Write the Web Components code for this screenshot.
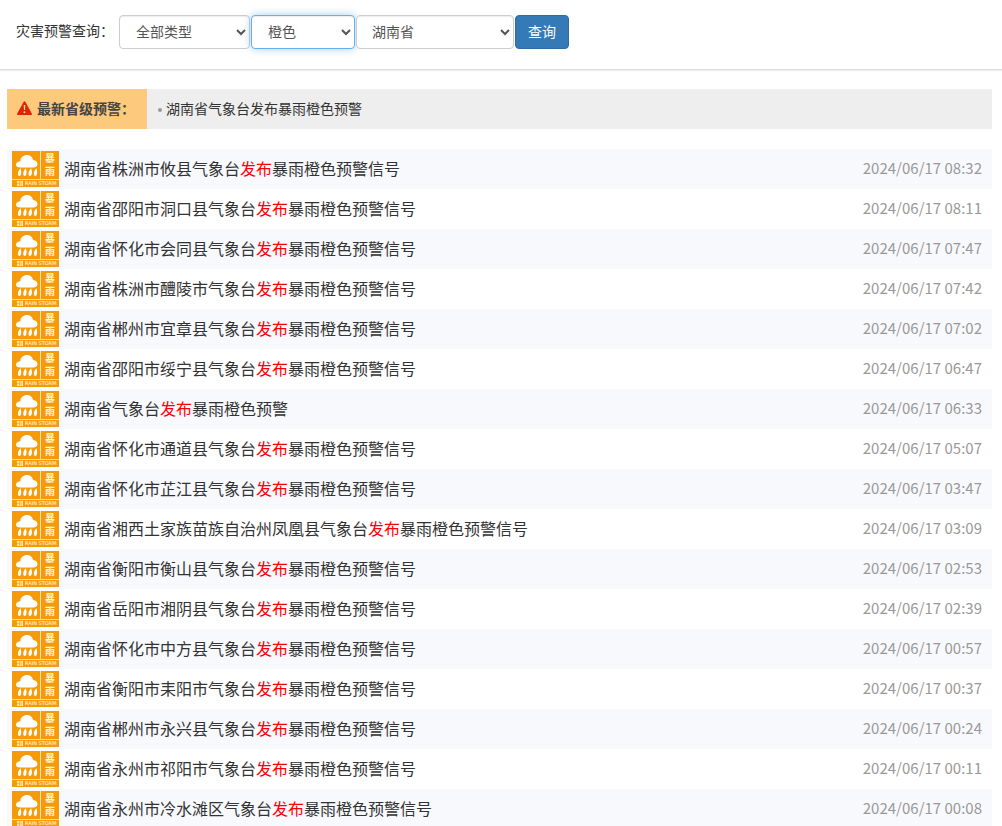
<!DOCTYPE html>
<html lang="zh-CN">
<head>
<meta charset="utf-8">
<title>灾害预警查询</title>
<style>
body { margin: 0; background: #fff; color: #333; font-family: "Noto Sans CJK SC", sans-serif; font-size: 14px; line-height: 20px; }
</style>
</head>
<body>
<alert-page></alert-page>

<script>
class AlertSearch extends HTMLElement {
  constructor() {
    super();
    this.attachShadow({ mode: "open" }).innerHTML = `
      <style>
        :host { display: block; border-bottom: 1px solid #ddd; box-shadow: 0 1px 1px #eee; }
        form { display: flex; align-items: center; gap: 1px; margin: 0; padding: 15px 16px 20px; }
        .label { width: 102px; padding-bottom: 4px; white-space: nowrap; }
        select, button { box-sizing: border-box; height: 34px; border-radius: 4px; font: inherit; }
        select { width: 131px; padding: 4px 0 6px 12px; border: 1px solid #ccc; background: #fff; color: #555; outline: 0; box-shadow: inset 0 1px 1px rgba(0,0,0,.075); }
        .level { width: 104px; border-color: #66afe9; box-shadow: inset 0 1px 1px rgba(0,0,0,.075), 0 0 8px rgba(102,175,233,.6); }
        .area { width: 158px; padding-left: 11px; }
        button { padding: 0 12px 2px; border: 1px solid #2e6da4; background: #337ab7; color: #fff; }
      </style>
      <form>
        <label class="label" for="type">灾害预警查询：</label>
        <select id="type"><option>全部类型</option></select>
        <select class="level" aria-label="级别"><option>橙色</option></select>
        <select class="area" aria-label="地区"><option>湖南省</option></select>
        <button type="button">查询</button>
      </form>`;
  }
}
customElements.define("alert-search", AlertSearch);

class AlertBanner extends HTMLElement {
  constructor() {
    super();
    this.attachShadow({ mode: "open" }).innerHTML = `
      <style>
        :host { display: flex; height: 40px; line-height: 38px; background: #eee; }
        .title { display: flex; gap: 5px; box-sizing: border-box; width: 140px; padding-left: 10px; background: #fdc97c; color: #444; font-weight: bold; white-space: nowrap; }
        svg { display: block; flex: none; margin-top: 12px; }
        .news { display: flex; gap: 4px; padding-left: 11px; }
        .news::before { content: ""; width: 4px; height: 4px; margin-top: 19px; border-radius: 50%; background: #999; }
        ::slotted(a) { color: #333; text-decoration: none; }
      </style>
      <div class="title">
        <svg width="15" height="14" viewBox="0 0 15 14" aria-hidden="true"><path d="M6.7.7Q7.5-.4 8.3.7L14.8 12.5Q15.2 14 14 14H1Q-.2 14 .2 12.5Z" fill="#dc2409"/><path d="M6.7 4h1.6L8 9H7z" fill="#fdd7a0"/><circle cx="7.5" cy="11.2" r="1" fill="#fdd7a0"/></svg>
        <span>最新省级预警：</span>
      </div>
      <div class="news"><slot></slot></div>`;
  }
}
customElements.define("alert-banner", AlertBanner);

class StormIcon extends HTMLElement {
  constructor() {
    super();
    this.attachShadow({ mode: "open" }).innerHTML = `
      <style>
        :host { display: block; flex: none; }
        svg { display: block; }
        text { font-family: "Noto Sans CJK SC", sans-serif; font-weight: bold; fill: #fff3df; }
        .en { font-family: "DejaVu Sans", sans-serif; font-weight: normal; fill: #fff; }
      </style>
      <svg width="47" height="36" viewBox="0 0 47 36" role="img" aria-label="暴雨橙色预警">
        <path fill="#f59a08" d="M0 0h47v36H0z"/>
        <path fill="#fce0b2" d="M28 0h1v28h-1zM0 28h47v1H0z"/>
        <path fill="#fff" d="M8 16.500C2.500 16.500 2.500 10.800 8.300 10.300C8.500 2.500 20 1.800 21 8.800C27 10 27 16.500 21 16.500Z"/>
        <path fill="#fff" d="M8.400 17.300C9.700 20 9.700 24.900 7.500 24.900C5 24.900 5.600 20.500 8.400 17.300ZM13.700 17.300C15 20 15 24.900 12.800 24.900C10.300 24.900 10.900 20.500 13.700 17.300ZM19 17.300C20.300 20 20.300 24.900 18.100 24.900C15.600 24.900 16.200 20.500 19 17.300ZM24.300 17.300C25.600 20 25.600 24.900 23.400 24.900C20.900 24.900 21.500 20.500 24.300 17.300Z"/>
        <text x="33" y="11" font-size="10">暴</text>
        <text x="33" y="24" font-size="10">雨</text>
        <path fill="#fce0b2" d="M5 30h6v5H5z"/>
        <path stroke="#f59a08" stroke-width=".6" d="M7.500 30v5M5 32.500h2M9 31v3"/>
        <text class="en" x="13" y="34" font-size="5">RAIN STORM</text>
      </svg>`;
  }
}
customElements.define("storm-icon", StormIcon);

class AlertRow extends HTMLElement {
  connectedCallback() {
    if (this.shadowRoot) return;
    this.attachShadow({ mode: "open" }).innerHTML = `
      <style>
        :host { display: flex; align-items: flex-start; gap: 5px; height: 40px; padding: 0 10px 0 5px; font-size: 16px; line-height: 38px; }
        :host(:nth-child(odd)) { background: #f8f9fd; }
        storm-icon { margin-top: 2px; }
        a { flex: 1; color: #333; text-decoration: none; white-space: nowrap; }
        em { color: #f00; font-style: normal; }
        time { color: #999; font-size: 15px; }
      </style>
      <storm-icon></storm-icon>
      <a href="#"><slot></slot><em>发布</em>${this.getAttribute("signal")}</a>
      <time>2024/06/17 ${this.getAttribute("time")}</time>`;
  }
}
customElements.define("alert-row", AlertRow);

const alerts = [
  ["株洲市攸县", "08:32"], ["邵阳市洞口县", "08:11"], ["怀化市会同县", "07:47"],
  ["株洲市醴陵市", "07:42"], ["郴州市宜章县", "07:02"], ["邵阳市绥宁县", "06:47"],
  ["", "06:33"], ["怀化市通道县", "05:07"], ["怀化市芷江县", "03:47"],
  ["湘西土家族苗族自治州凤凰县", "03:09"], ["衡阳市衡山县", "02:53"],
  ["岳阳市湘阴县", "02:39"], ["怀化市中方县", "00:57"], ["衡阳市耒阳市", "00:37"],
  ["郴州市永兴县", "00:24"], ["永州市祁阳市", "00:11"], ["永州市冷水滩区", "00:08"]
];

class AlertPage extends HTMLElement {
  constructor() {
    super();
    this.attachShadow({ mode: "open" }).innerHTML = `
      <style>
        :host { display: block; }
        main { display: grid; gap: 20px; padding: 19px 10px 0 7px; }
      </style>
      <alert-search></alert-search>
      <main>
        <alert-banner><a href="#">湖南省气象台发布暴雨橙色预警</a></alert-banner>
        <section>${alerts.map(([place, time]) =>
          `<alert-row time="${time}" signal="暴雨橙色预警${place ? "信号" : ""}">湖南省${place}气象台</alert-row>`).join("")}</section>
      </main>`;
  }
}
customElements.define("alert-page", AlertPage);
</script>
</body>
</html>
